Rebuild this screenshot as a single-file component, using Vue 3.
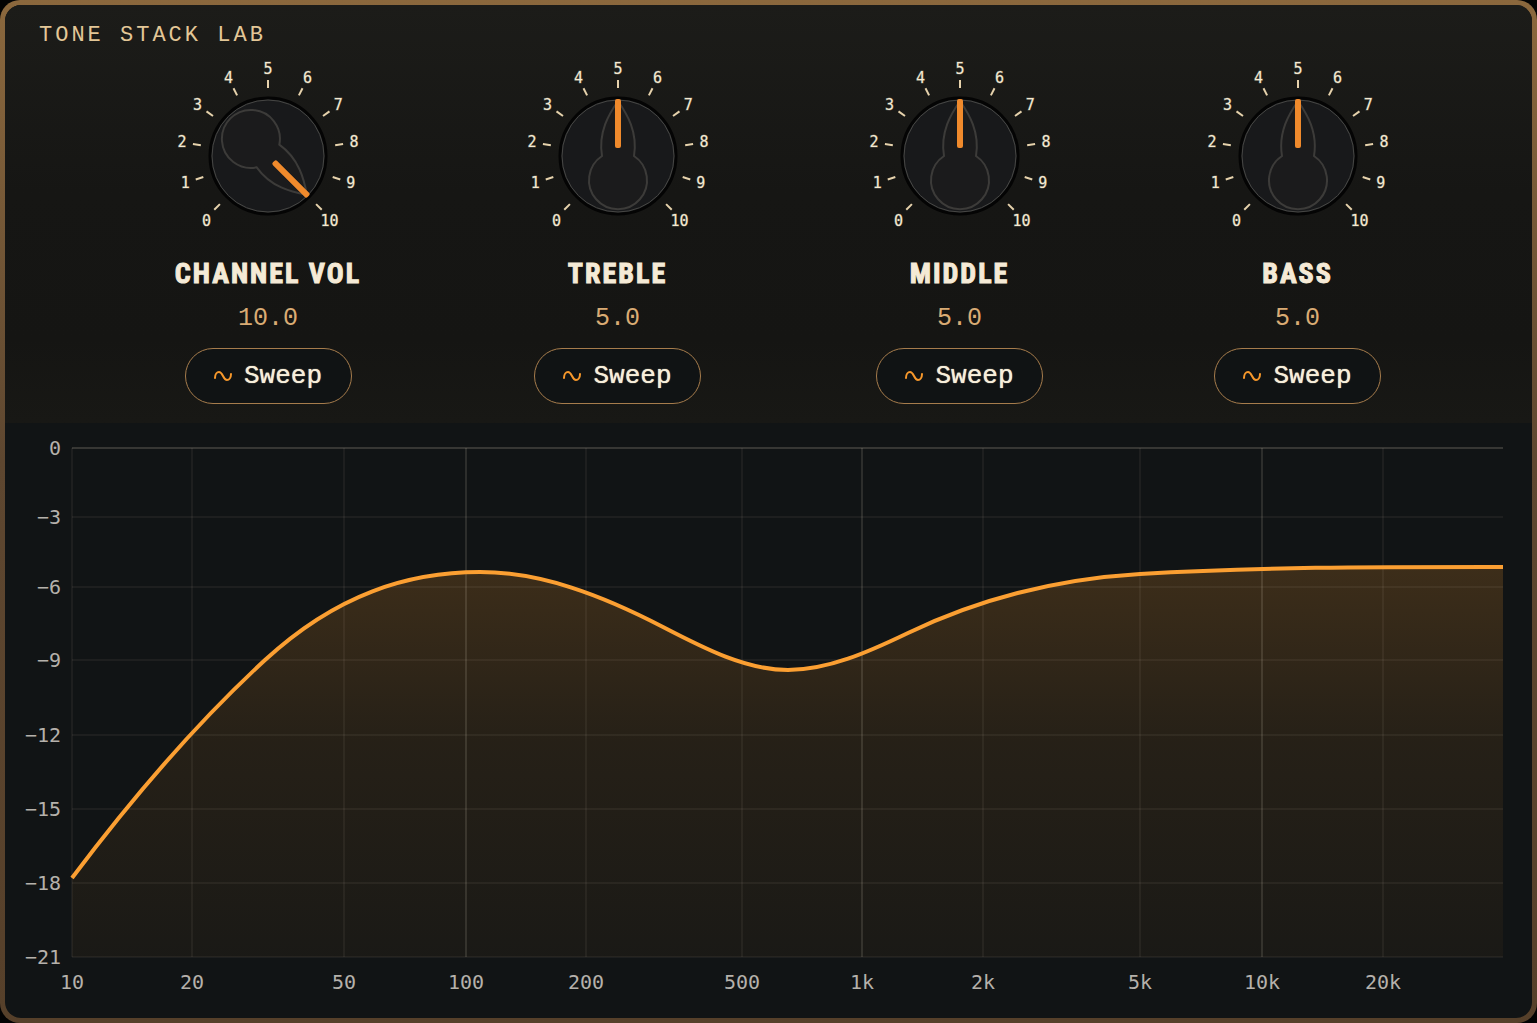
<template>
  <main class="lab">
    <div class="panel">
      <section class="controls">
        <h1 class="title">TONE STACK LAB</h1>
        <div class="knobs">
          <div v-for="knob in knobs" :key="knob.id" class="knob">
            <div class="dial">
              <svg class="dial-face" viewBox="-110 -106 220 184" aria-hidden="true">
                <circle r="58" class="rim" />
                <circle r="56" class="cap" />
                <g v-for="mark in marks" :key="mark.n">
                  <line :x1="mark.x1" :y1="mark.y1" :x2="mark.x2" :y2="mark.y2" class="tick" />
                  <text :x="mark.tx" :y="mark.ty" class="digit">{{ mark.n }}</text>
                </g>
                <g :transform="`rotate(${angleFor(knob.value)})`">
                  <path class="pointer" d="M0 -55 C-9 -42 -20 -24 -16 0 A29 29 0 1 0 16 0 C20 -24 9 -42 0 -55 Z" />
                  <rect class="needle" x="-3" y="-57" width="6" height="49" rx="2" />
                </g>
              </svg>
              <input
                :id="knob.id"
                v-model.number="knob.value"
                class="dial-input"
                type="range"
                min="0"
                max="10"
                step="0.1"
              />
            </div>
            <label :for="knob.id" class="name">{{ knob.label }}</label>
            <output :for="knob.id" class="value">{{ knob.value.toFixed(1) }}</output>
            <button type="button" class="sweep" :aria-pressed="knob.sweeping" @click="toggleSweep(knob)">
              <svg class="wave" viewBox="0 0 18 12" aria-hidden="true">
                <path d="M1 8 C1 4 3 2 5 2 C9 2 9 10 13 10 C15 10 17 8 17 4" />
              </svg>
              <span>Sweep</span>
            </button>
          </div>
        </div>
      </section>

      <section class="response">
        <svg class="chart" viewBox="0 0 1527 595" role="img">
          <defs>
            <linearGradient id="fill" gradientUnits="userSpaceOnUse" x1="0" y1="144" x2="0" y2="534">
              <stop offset="0" stop-color="#f79a2d" stop-opacity="0.19" />
              <stop offset="0.45" stop-color="#f79a2d" stop-opacity="0.09" />
              <stop offset="1" stop-color="#f79a2d" stop-opacity="0.04" />
            </linearGradient>
          </defs>
          <path :d="areaPath" fill="url(#fill)" />
          <g v-for="row in rows" :key="row.label">
            <line x1="67" :y1="row.y" x2="1498" :y2="row.y" class="grid" :class="{ zero: row.label === '0' }" />
            <text x="56" :y="row.y + 7" class="axis axis-y">{{ row.label }}</text>
          </g>
          <g v-for="col in cols" :key="col.label">
            <line :x1="col.x" y1="25" :x2="col.x" y2="534" class="grid" :class="{ decade: col.decade }" />
            <text :x="col.x" y="566" class="axis axis-x">{{ col.label }}</text>
          </g>
          <path :d="curvePath" class="curve" />
        </svg>
      </section>
    </div>
  </main>
</template>

<script setup>
import { reactive, onUnmounted } from 'vue'

const knobs = reactive([
  { id: 'volume', label: 'CHANNEL VOL', value: 10, sweeping: false, dir: -1 },
  { id: 'treble', label: 'TREBLE', value: 5, sweeping: false, dir: 1 },
  { id: 'middle', label: 'MIDDLE', value: 5, sweeping: false, dir: 1 },
  { id: 'bass', label: 'BASS', value: 5, sweeping: false, dir: 1 }
])

// 0 sits at -135deg, 10 at +135deg
const angleFor = (value) => value * 27 - 135

const marks = Array.from({ length: 11 }, (_, n) => {
  const rad = (angleFor(n) * Math.PI) / 180
  const sin = Math.sin(rad)
  const cos = -Math.cos(rad)
  return {
    n,
    x1: sin * 68,
    y1: cos * 68,
    x2: sin * 76,
    y2: cos * 76,
    tx: sin * 87,
    // The end stops sit slightly lower than the circle
    ty: cos * 87 + (n % 10 ? 5 : 8)
  }
})

const rows = [
  { label: '0', y: 25 },
  { label: '−3', y: 94 },
  { label: '−6', y: 164 },
  { label: '−9', y: 237 },
  { label: '−12', y: 312 },
  { label: '−15', y: 386 },
  { label: '−18', y: 460 },
  { label: '−21', y: 534 }
]

const cols = [
  { label: '10', x: 67 },
  { label: '20', x: 187 },
  { label: '50', x: 339 },
  { label: '100', x: 461, decade: true },
  { label: '200', x: 581 },
  { label: '500', x: 737 },
  { label: '1k', x: 857, decade: true },
  { label: '2k', x: 978 },
  { label: '5k', x: 1135 },
  { label: '10k', x: 1257, decade: true },
  { label: '20k', x: 1378 }
]

// Extremes and inflections of the response, each with its slope
const nodes = [
  { x: 67, y: 455, m: -1.33 },
  { x: 260, y: 237, m: -0.92 },
  { x: 475, y: 149, m: 0 },
  { x: 658, y: 204, m: 0.52 },
  { x: 783, y: 247, m: 0 },
  { x: 903, y: 210, m: -0.48 },
  { x: 1135, y: 151, m: -0.06 },
  { x: 1498, y: 144, m: 0 }
]

const curvePath = nodes.reduce((d, p, i) => {
  if (i === 0) return `M${p.x} ${p.y}`
  const q = nodes[i - 1]
  const third = (p.x - q.x) / 3
  return `${d} C${q.x + third} ${q.y + q.m * third} ${p.x - third} ${p.y - p.m * third} ${p.x} ${p.y}`
}, '')

const areaPath = `${curvePath} V534 H67 Z`

let timer = null

const step = () => {
  knobs.filter((k) => k.sweeping).forEach((k) => {
    k.value = Math.min(10, Math.max(0, k.value + k.dir * 0.1))
    if (k.value >= 10) k.dir = -1
    if (k.value <= 0) k.dir = 1
  })
}

const toggleSweep = (knob) => {
  knob.sweeping = !knob.sweeping
  clearInterval(timer)
  timer = knobs.some((k) => k.sweeping) ? setInterval(step, 40) : null
}

onUnmounted(() => clearInterval(timer))
</script>

<style>
body {
  margin: 0;
  background: #030303;
}
</style>

<style scoped>
.lab {
  padding: 5px;
  border-radius: 20px;
  background: linear-gradient(#8b683d 0%, #5e4730 45%, #56402a 100%);
  font-family: "Liberation Mono", "DejaVu Sans Mono", monospace;
}

.panel {
  border-radius: 16px;
  overflow: hidden;
  background: #111415;
}

.controls {
  padding: 19px 0 19px;
  background: linear-gradient(#1c1c19 0%, #161614 45%, #151513 80%, #181815 100%);
}

.title {
  margin: 0 0 2px;
  padding-left: 34px;
  font-size: 22px;
  line-height: 24px;
  font-weight: 400;
  letter-spacing: 3px;
  color: #e3c797;
}

.knobs {
  display: grid;
  grid-template-columns: 354fr 345fr 339fr 337fr;
  padding: 0 66px 0 86px;
}

.knob {
  display: flex;
  flex-direction: column;
  align-items: center;
}

.dial {
  position: relative;
  width: 220px;
  height: 184px;
}

.dial-face {
  display: block;
  width: 100%;
  height: 100%;
}

.dial-input {
  position: absolute;
  inset: 48px 52px 20px;
  margin: 0;
  opacity: 0;
  cursor: grab;
}

.rim {
  fill: #181a1b;
  stroke: #040404;
  stroke-width: 3;
}

.cap {
  fill: #18191b;
  stroke: #474745;
  stroke-width: 1;
}

.pointer {
  fill: #1b1b1c;
  stroke: #3c3b39;
  stroke-width: 2;
}

.needle {
  fill: #f08a2c;
}

.tick {
  stroke: #e6d2ac;
  stroke-width: 2;
}

.digit {
  font-family: "DejaVu Sans Mono", monospace;
  font-size: 15px;
  fill: #f5ead2;
  stroke: #f5ead2;
  stroke-opacity: 0.3;
  text-anchor: middle;
}

.name {
  margin-top: 24px;
  font-family: "Roboto Condensed", "Liberation Sans Narrow", "DejaVu Sans Condensed", sans-serif;
  font-size: 28px;
  line-height: 32px;
  font-weight: 700;
  letter-spacing: 2px;
  color: #f5ead6;
  -webkit-text-stroke: 1px #f5ead6;
}

.value {
  margin-top: 15px;
  font-size: 25px;
  line-height: 28px;
  color: #d9ab74;
}

.sweep {
  display: flex;
  align-items: center;
  justify-content: center;
  gap: 12px;
  width: 167px;
  height: 56px;
  margin-top: 15px;
  padding: 0;
  border: 1px solid #a67c4c;
  border-radius: 28px;
  background: #101314;
  color: #f7eeda;
  font-family: inherit;
  font-size: 26px;
  text-shadow: 0 0 1px #f7eeda;
  cursor: pointer;
}

.wave {
  width: 18px;
  height: 12px;
}

.wave path {
  fill: none;
  stroke: #f7982b;
  stroke-width: 2;
  stroke-linecap: round;
}

.chart {
  display: block;
  width: 100%;
}

.grid {
  stroke: #fff2dc;
  stroke-opacity: 0.11;
  stroke-width: 1;
}

.decade {
  stroke-opacity: 0.24;
}

.zero {
  stroke-opacity: 0.16;
  stroke-width: 2;
}

.axis {
  font-family: "DejaVu Sans Mono", monospace;
  font-size: 20px;
  fill: #b5b1ab;
}

.axis-y {
  text-anchor: end;
}

.axis-x {
  text-anchor: middle;
}

.curve {
  fill: none;
  stroke: #fb9f32;
  stroke-width: 4;
}
</style>
